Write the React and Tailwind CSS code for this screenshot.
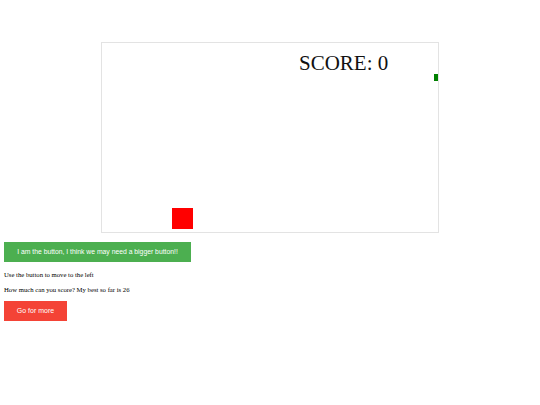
export default function App() {
  return (
    <div className="w-[540px] h-[405px] bg-white" style={{ fontFamily: '"Liberation Serif", serif' }}>
      <div className="pt-[42px]">
        <div className="relative mx-auto w-[338px] h-[191px] border border-[#e3e3e3] bg-white">
          <div className="absolute left-[197px] top-[6px] text-[21px] leading-[28px] text-[#111]">SCORE: 0</div>
          <div className="absolute right-0 top-[31px] w-[4px] h-[7px] bg-[#008000]" />
          <div className="absolute left-[70px] top-[165px] w-[21px] h-[21px] bg-[#ff0000]" />
        </div>
      </div>
      <div className="flex flex-col items-start pl-[4px] pt-[9px]">
        <button
          className="w-[187px] h-[20px] bg-[#4caf50] text-white text-[6.8px] flex items-center justify-center"
          style={{ fontFamily: '"Liberation Sans", Arial, sans-serif' }}
        >
          I am the button, I think we may need a bigger button!!
        </button>
        <p className="mt-[8px] text-[6.7px] leading-[9px] text-black">Use the button to move to the left</p>
        <p className="mt-[6px] text-[6.7px] leading-[9px] text-black">How much can you score? My best so far is 26</p>
        <button
          className="mt-[7px] w-[63px] h-[20px] bg-[#f44336] text-white text-[7px] flex items-center justify-center"
          style={{ fontFamily: '"Liberation Sans", Arial, sans-serif' }}
        >
          Go for more
        </button>
      </div>
    </div>
  );
}
